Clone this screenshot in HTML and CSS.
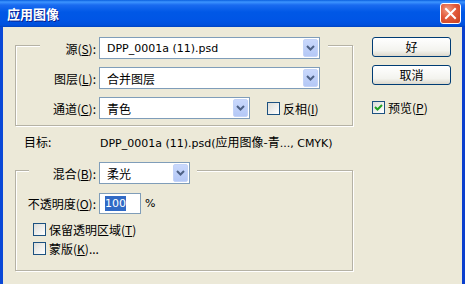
FILE: index.html
```html
<!DOCTYPE html>
<html lang="zh-CN">
<head>
    <meta charset="UTF-8">
    <title>应用图像</title>
    <link rel="stylesheet" href="styles.css">
</head>
<body>
<div class="window">
    <div class="titlebar">
        <span class="title">应用图像</span>
        <button class="close">
            <svg width="13" height="13" viewBox="0 0 13 13"><path d="M2 2 L11 11 M11 2 L2 11" stroke="#fff" stroke-width="2" stroke-linecap="square"/></svg>
        </button>
    </div>

    <div class="client">
        <div class="main">
            <div class="group group-source">
                <div class="row head">
                    <span class="lbl">源(<u>S</u>):</span>
                    <div class="select wide"><span class="val">DPP_0001a (11).psd</span><i class="arrow"><svg width="9" height="6" viewBox="0 0 9 6"><path d="M1 1 L4.5 4.5 L8 1" fill="none" stroke="#4D6185" stroke-width="2"/></svg></i></div>
                </div>
                <div class="row">
                    <span class="lbl">图层(<u>L</u>):</span>
                    <div class="select wide"><span class="val cjk">合并图层</span><i class="arrow"><svg width="9" height="6" viewBox="0 0 9 6"><path d="M1 1 L4.5 4.5 L8 1" fill="none" stroke="#4D6185" stroke-width="2"/></svg></i></div>
                </div>
                <div class="row">
                    <span class="lbl">通道(<u>C</u>):</span>
                    <div class="select mid"><span class="val cjk">青色</span><i class="arrow"><svg width="9" height="6" viewBox="0 0 9 6"><path d="M1 1 L4.5 4.5 L8 1" fill="none" stroke="#4D6185" stroke-width="2"/></svg></i></div>
                    <label class="checkline invert"><span class="check"></span><span class="cjk">反相(<u>I</u>)</span></label>
                </div>
            </div>

            <div class="target">
                <span class="target-lbl cjk">目标:</span>
                <span>DPP_0001a (11).psd(<span class="cjk">应用图像-青</span>..., CMYK)</span>
            </div>

            <div class="group group-blend">
                <div class="row head">
                    <span class="lbl">混合(<u>B</u>):</span>
                    <div class="select short"><span class="val cjk">柔光</span><i class="arrow"><svg width="9" height="6" viewBox="0 0 9 6"><path d="M1 1 L4.5 4.5 L8 1" fill="none" stroke="#4D6185" stroke-width="2"/></svg></i></div>
                </div>
                <div class="row opacity">
                    <span class="lbl">不透明度(<u>O</u>):</span>
                    <div class="field"><span class="sel">100</span></div>
                    <span class="pct">%</span>
                </div>
                <label class="checkline opt"><span class="check"></span><span class="cjk">保留透明区域(<u>T</u>)</span></label>
                <label class="checkline opt"><span class="check"></span><span class="cjk">蒙版(<u>K</u>)...</span></label>
            </div>
        </div>

        <div class="side">
            <button class="btn default">好</button>
            <button class="btn">取消</button>
            <label class="checkline preview"><span class="check on"><svg width="11" height="11" viewBox="0 0 11 11"><path d="M2 5 L4.5 7.5 L9 3" fill="none" stroke="#21A121" stroke-width="2"/></svg></span><span class="cjk">预览(<u>P</u>)</span></label>
        </div>
    </div>
</div>
</body>
</html>
```

FILE: styles.css
```css
body {
    margin: 0;
    background: #ECE9D8;
    font-family: "DejaVu Sans", "Noto Sans CJK SC", sans-serif;
    font-size: 11px;
    color: #000;
}
.cjk, .lbl, .btn {
    font-family: "Noto Sans CJK SC", sans-serif;
    font-size: 12px;
}
.window {
    width: 465px;
    height: 284px;
    overflow: hidden;
    display: flex;
    flex-direction: column;
}
.titlebar {
    height: 27px;
    flex: none;
    display: flex;
    align-items: center;
    justify-content: space-between;
    padding: 0 4px 0 7px;
    background: linear-gradient(#0A5FDE 0, #3D95FF 2px, #1A6BF0 5px, #0058E6 12px, #0055E5 20px, #0050DD 25px, #0043C0 27px);
}
.title {
    color: #fff;
    font: bold 13px "Noto Sans CJK SC", sans-serif;
    text-shadow: 1px 1px 0 #0B1F8C;
}
.close {
    width: 21px;
    height: 21px;
    padding: 0;
    border: 1px solid #fff;
    border-radius: 3px;
    background: radial-gradient(circle at 35% 30%, #F19E83 0, #E2593A 45%, #C8401F 100%);
    display: flex;
    align-items: center;
    justify-content: center;
}
.client {
    flex: 1;
    display: flex;
    border-left: 3px solid #0A48D7;
    border-right: 3px solid #0A3FCE;
    padding-left: 12px;
}
.main {
    width: 338px;
    padding-top: 18px;
}
.group {
    border: 1px solid #B5B2A5;
    box-shadow: 1px 1px 0 #fff, inset 1px 1px 0 #fff;
}
.group-source {
    padding-bottom: 6px;
}
.group-blend {
    margin-top: 22px;
    padding-bottom: 15px;
}
.row {
    display: flex;
    align-items: center;
    height: 22px;
    margin-top: 8px;
}
.head {
    width: fit-content;
    margin-top: -9px;
    background: #ECE9D8;
}
.lbl {
    width: 80px;
    margin-right: 3px;
    text-align: right;
    white-space: nowrap;
}
.group-source .head {
    margin-left: 24px;
    padding-right: 8px;
}
.group-source .head .lbl {
    width: 56px;
}
.group-blend .head {
    margin-left: 13px;
    padding-right: 7px;
}
.group-blend .head .lbl {
    width: 67px;
}
.select {
    height: 22px;
    box-sizing: border-box;
    border: 1px solid #7F9DB9;
    background: #fff;
    display: flex;
    align-items: center;
    justify-content: space-between;
    padding: 1px;
}
.select.wide { width: 221px; }
.select.mid { width: 151px; }
.select.short { width: 91px; }
.val {
    padding-left: 6px;
    white-space: nowrap;
}
.arrow {
    width: 15px;
    height: 18px;
    box-sizing: border-box;
    border: 1px solid #C3D3F8;
    border-radius: 2px;
    background: linear-gradient(#C9D8FC, #B4C8F6);
    display: flex;
    align-items: center;
    justify-content: center;
}
.checkline {
    display: flex;
    align-items: center;
    gap: 3px;
    height: 13px;
    white-space: nowrap;
}
.check {
    width: 13px;
    height: 13px;
    flex: none;
    box-sizing: border-box;
    border: 1px solid #1C5180;
    background: linear-gradient(135deg, #DCDCD7, #FFFFFF);
    display: flex;
}
.invert {
    margin-left: 17px;
}
.target {
    display: flex;
    align-items: center;
    height: 14px;
    margin-top: 8px;
    white-space: nowrap;
}
.target-lbl {
    width: 76px;
    padding-left: 9px;
}
.opacity {
    height: 21px;
    margin-top: 9px;
}
.field {
    width: 42px;
    height: 21px;
    box-sizing: border-box;
    border: 1px solid #7F9DB9;
    background: #fff;
    display: flex;
    align-items: center;
    padding-left: 5px;
}
.sel {
    background: #316AC5;
    color: #fff;
    line-height: 15px;
}
.pct {
    margin-left: 4px;
}
.opt {
    margin: 9px 0 0 17px;
}
.opt + .opt {
    margin-top: 6px;
}
.side {
    width: 79px;
    margin-left: 19px;
    padding-top: 10px;
    display: flex;
    flex-direction: column;
}
.btn {
    height: 20px;
    padding: 0;
    border: 1px solid #003C74;
    border-radius: 3px;
    background: linear-gradient(#FFFFFF, #F3F3EE 70%, #DCD8CC);
    line-height: 16px;
}
.btn + .btn {
    margin-top: 8px;
}
.preview {
    margin-top: 16px;
}
```
